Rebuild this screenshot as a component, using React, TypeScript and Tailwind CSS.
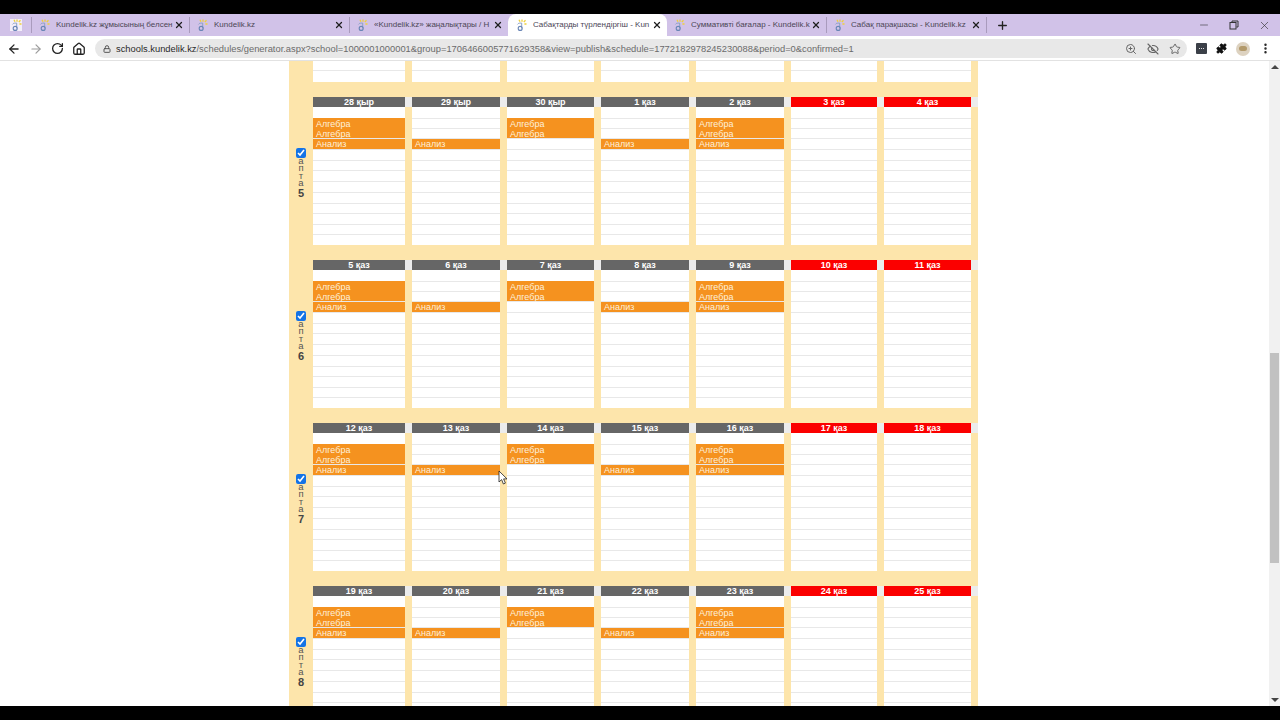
import React from 'react';
import { ArrowLeft, ArrowRight, RotateCw, Home, Lock, ZoomIn, EyeOff, Star, Puzzle, MoreVertical, X, Plus, Minus } from 'lucide-react';

const Favicon: React.FC = () => (
  <svg width="12" height="13" viewBox="0 0 12 13" className="shrink-0">
    <path d="M7 0.5v2.2M10.5 1.2L8.8 3M11.5 5H9.4M4 0.8l1 2" stroke="#efd03c" strokeWidth="1.3" fill="none" />
    <path d="M2.5 5.4c0.6-1 1.5-1.3 2.6-1.3h1.6v5.4" stroke="#8aa0c6" strokeWidth="1" fill="none" />
    <circle cx="5.2" cy="9.4" r="2" stroke="#6a86b6" strokeWidth="1.1" fill="none" />
  </svg>
);

type TabProps = { title: string; width: string; active?: boolean; sep?: boolean };

const Tab: React.FC<TabProps> = ({ title, width, active, sep = true }) => (
  <div className={`${width} flex items-center shrink-0 pr-[4px] ${active ? 'h-full bg-white rounded-t-lg pl-[7px]' : sep ? 'h-[16px] border-r border-[#a99bbd] pl-[6px]' : 'h-[16px] pl-[6px]'}`}>
    <Favicon />
    <span className="ml-[6px] flex-1 overflow-hidden whitespace-nowrap text-[8px] text-[#4b4655]">{title}</span>
    <X size={10} strokeWidth={3} className="shrink-0 ml-[1px] mr-[1px] text-[#1f1f1f]" />
  </div>
);

const TabStrip: React.FC = () => (
  <div className="h-[22px] bg-[#d1c2e8] flex items-end shrink-0">
    <div className="h-[16px] self-center w-[32px] flex items-center justify-center border-r border-[#a99bbd] shrink-0 pl-px">
      <div className="w-[12px] h-[12px] bg-[#f3eef9] flex items-center justify-center"><Favicon /></div>
    </div>
    <div className="h-full flex items-center">
      <Tab title="Kundelik.kz жұмысының белсен" width="w-[158px]" />
      <Tab title="Kundelik.kz" width="w-[160px]" />
      <Tab title="«Kundelik.kz» жаңалықтары / Н" width="w-[158px]" sep={false} />
    </div>
    <div className="h-[22px]">
      <Tab title="Сабақтарды түрлендіргіш - Kun" width="w-[159px]" active />
    </div>
    <div className="h-full flex items-center">
      <Tab title="Суммативті бағалар - Kundelik.k" width="w-[160px]" />
      <Tab title="Сабақ парақшасы - Kundelik.kz" width="w-[160px]" />
    </div>
    <div className="h-full flex items-center ml-[9px]">
      <Plus size={13} strokeWidth={2.5} className="text-[#222]" />
    </div>
    <div className="flex-1" />
    <div className="h-full flex items-center gap-[19px] pr-[9px] text-[#333]">
      <Minus size={12} strokeWidth={1.2} />
      <svg width="10" height="10" viewBox="0 0 10 10" fill="none" stroke="currentColor" strokeWidth="1">
        <path d="M3 2.5V1h6v6H7.5" />
        <rect x="1" y="2.5" width="6" height="6.5" />
      </svg>
      <X size={13} strokeWidth={1.2} />
    </div>
  </div>
);

const Toolbar: React.FC = () => (
  <div className="h-[25px] bg-white border-b border-[#e2e2e2] flex items-center shrink-0 pt-px">
    <div className="w-[95px] flex items-center pl-[7px] gap-[8px] shrink-0 text-[#222]">
      <ArrowLeft size={14} strokeWidth={2.2} />
      <ArrowRight size={14} strokeWidth={2} className="text-[#9c9c9c]" />
      <RotateCw size={13} strokeWidth={2.4} />
      <Home size={14} strokeWidth={2.2} />
    </div>
    <div className="w-[1092px] h-[19px] rounded-full bg-[#e8e8e8] flex items-center pl-[8px] pr-[6px]">
      <Lock size={8} strokeWidth={3} className="text-[#555] shrink-0" />
      <span className="ml-[5px] pt-px flex-1 whitespace-nowrap overflow-hidden text-[9.35px] text-[#6b6b6b]">
        <span className="text-[#2a2a2a]">schools.kundelik.kz</span>/schedules/generator.aspx?school=1000001000001&group=1706466005771629358&view=publish&schedule=1772182978245230088&period=0&confirmed=1
      </span>
      <div className="flex items-center gap-[10px] text-[#666] shrink-0">
        <ZoomIn size={12} />
        <EyeOff size={12} strokeWidth={2.2} />
        <Star size={12} />
      </div>
    </div>
    <div className="flex items-center flex-1 pl-[9px] pr-[8px] justify-between">
      <div className="w-[11px] h-[11px] bg-[#3b4048] rounded-[1px] flex items-center justify-center gap-px">
        <div className="w-px h-px bg-[#e0e0e0]" />
        <div className="w-px h-px bg-[#e0e0e0]" />
        <div className="w-px h-px bg-[#e0e0e0]" />
      </div>
      <Puzzle size={11} fill="#111" className="text-[#111]" />
      <div className="w-[14px] h-[14px] rounded-full bg-[#ddd2c0] flex items-center justify-center">
        <div className="w-[8px] h-[5px] rounded-sm bg-[#b39a6b]" />
      </div>
      <MoreVertical size={13} strokeWidth={2.5} className="text-[#222]" />
    </div>
  </div>
);

const COLS = ['w-[92px]', 'w-[88px]', 'w-[87px]', 'w-[88px]', 'w-[88px]', 'w-[86px]', 'w-[87px]'];

// the timetable's rows are not even, they alternate 10/11px
const ROWS = ['h-[12px]', 'h-[10px]', 'h-[10px]', 'h-[11px]', 'h-[11px]', 'h-[10px]', 'h-[11px]', 'h-[11px]', 'h-[11px]', 'h-[10px]', 'h-[11px]', 'h-[10px]', 'h-[10px]'];

// lesson rows for each weekday, keyed by row index
const LESSONS: Record<number, string>[] = [
  { 1: 'Алгебра', 2: 'Алгебра', 3: 'Анализ' },
  { 3: 'Анализ' },
  { 1: 'Алгебра', 2: 'Алгебра' },
  { 3: 'Анализ' },
  { 1: 'Алгебра', 2: 'Алгебра', 3: 'Анализ' },
  {},
  {},
];

const WEEKS = [
  { num: 5, days: ['28 қыр', '29 қыр', '30 қыр', '1 қаз', '2 қаз', '3 қаз', '4 қаз'] },
  { num: 6, days: ['5 қаз', '6 қаз', '7 қаз', '8 қаз', '9 қаз', '10 қаз', '11 қаз'] },
  { num: 7, days: ['12 қаз', '13 қаз', '14 қаз', '15 қаз', '16 қаз', '17 қаз', '18 қаз'] },
  { num: 8, days: ['19 қаз', '20 қаз', '21 қаз', '22 қаз', '23 қаз', '24 қаз', '25 қаз'] },
];

const lineColor = (i: number, lessons: Record<number, string>) => {
  if (i === 12) return 'border-transparent';
  // no rule inside the orange Алгебра block
  if ((i === 0 || i === 1) && lessons[1]) return 'border-[#f5921f]';
  return 'border-[#e8e8e8]';
};

const DayBody: React.FC<{ width: string; lessons: Record<number, string> }> = ({ width, lessons }) => (
  <div className={`${width} shrink-0 bg-white flex flex-col`}>
    {ROWS.map((h, i) => (
      <div
        key={i}
        className={`${h} shrink-0 flex items-center pl-[3px] pt-px text-[9px] leading-none text-[#fdf0dc] border-b ${lessons[i] ? 'bg-[#f5921f]' : ''} ${lineColor(i, lessons)}`}
      >
        {lessons[i]}
      </div>
    ))}
  </div>
);

const Week: React.FC<{ num: number; days: string[] }> = ({ num, days }) => (
  <div className="flex mb-[15px]">
    <div className="w-[24px] shrink-0 flex flex-col items-center pt-[51px] text-[#555] text-[9.5px] leading-[7.4px]">
      <input type="checkbox" checked readOnly className="w-[10px] h-[10px] m-0 accent-[#1473e6]" />
      <span className="-mt-px">а</span>
      <span>п</span>
      <span>т</span>
      <span>а</span>
      <span className="mt-[3px] text-[11px] font-bold text-[#444]">{num}</span>
    </div>
    <div className="flex flex-col">
      <div className="flex gap-[7px] pr-[7px] bg-[#ececec]">
        {days.map((d, i) => (
          <div key={d} className={`${COLS[i]} h-[10px] pt-[2px] shrink-0 flex items-center justify-center text-[9px] font-bold text-white ${i > 4 ? 'bg-[#fb0000]' : 'bg-[#666666]'}`}>{d}</div>
        ))}
      </div>
      <div className="flex gap-[7px]">
        {days.map((d, i) => (
          <DayBody key={d} width={COLS[i]} lessons={LESSONS[i]} />
        ))}
      </div>
    </div>
  </div>
);

const App: React.FC = () => {
  return (
    <div className="w-[1280px] h-[720px] flex flex-col bg-black overflow-hidden" style={{ fontFamily: '"Liberation Sans", Arial, sans-serif' }}>
      <div className="h-[14px] shrink-0" />
      <TabStrip />
      <Toolbar />
      <div className="flex-1 min-h-0 flex bg-white overflow-hidden relative">
        <div className="flex-1 flex justify-start pl-[289px] overflow-hidden">
          <div className="w-[689px] bg-[#fde5ab] h-max">
            {/* tail of the week above the fold */}
            <div className="flex pl-[24px] gap-[7px] mb-[15px]">
              {COLS.map((c) => (
                <div key={c} className={`${c} h-[21px] bg-white flex flex-col shrink-0`}>
                  <div className="h-[10px] border-b border-[#e8e8e8]" />
                </div>
              ))}
            </div>
            {WEEKS.map((w) => (
              <Week key={w.num} num={w.num} days={w.days} />
            ))}
          </div>
        </div>
        <div className="w-[11px] shrink-0 bg-[#f1f1f1] flex flex-col items-center justify-between py-[4px]">
          <div className="w-0 h-0 border-x-[4px] border-x-transparent border-b-[4px] border-b-[#444]" />
          <div className="w-0 h-0 border-x-[4px] border-x-transparent border-t-[4px] border-t-[#444]" />
        </div>
        {/* scrollbar thumb */}
        <div className="absolute right-px top-[292px] w-[9px] h-[210px] bg-[#c1c1c1]" />
        {/* mouse cursor */}
        <svg width="10" height="16" viewBox="0 0 10 16" className="absolute left-[498px] top-[409px]">
          <path d="M1 1v11l2.6-2.4L5.4 14l2-0.9-1.8-4.2H9z" fill="#fff" stroke="#222" strokeWidth="0.8" />
        </svg>
      </div>
      <div className="h-[14px] shrink-0" />
    </div>
  );
};

export default App;
